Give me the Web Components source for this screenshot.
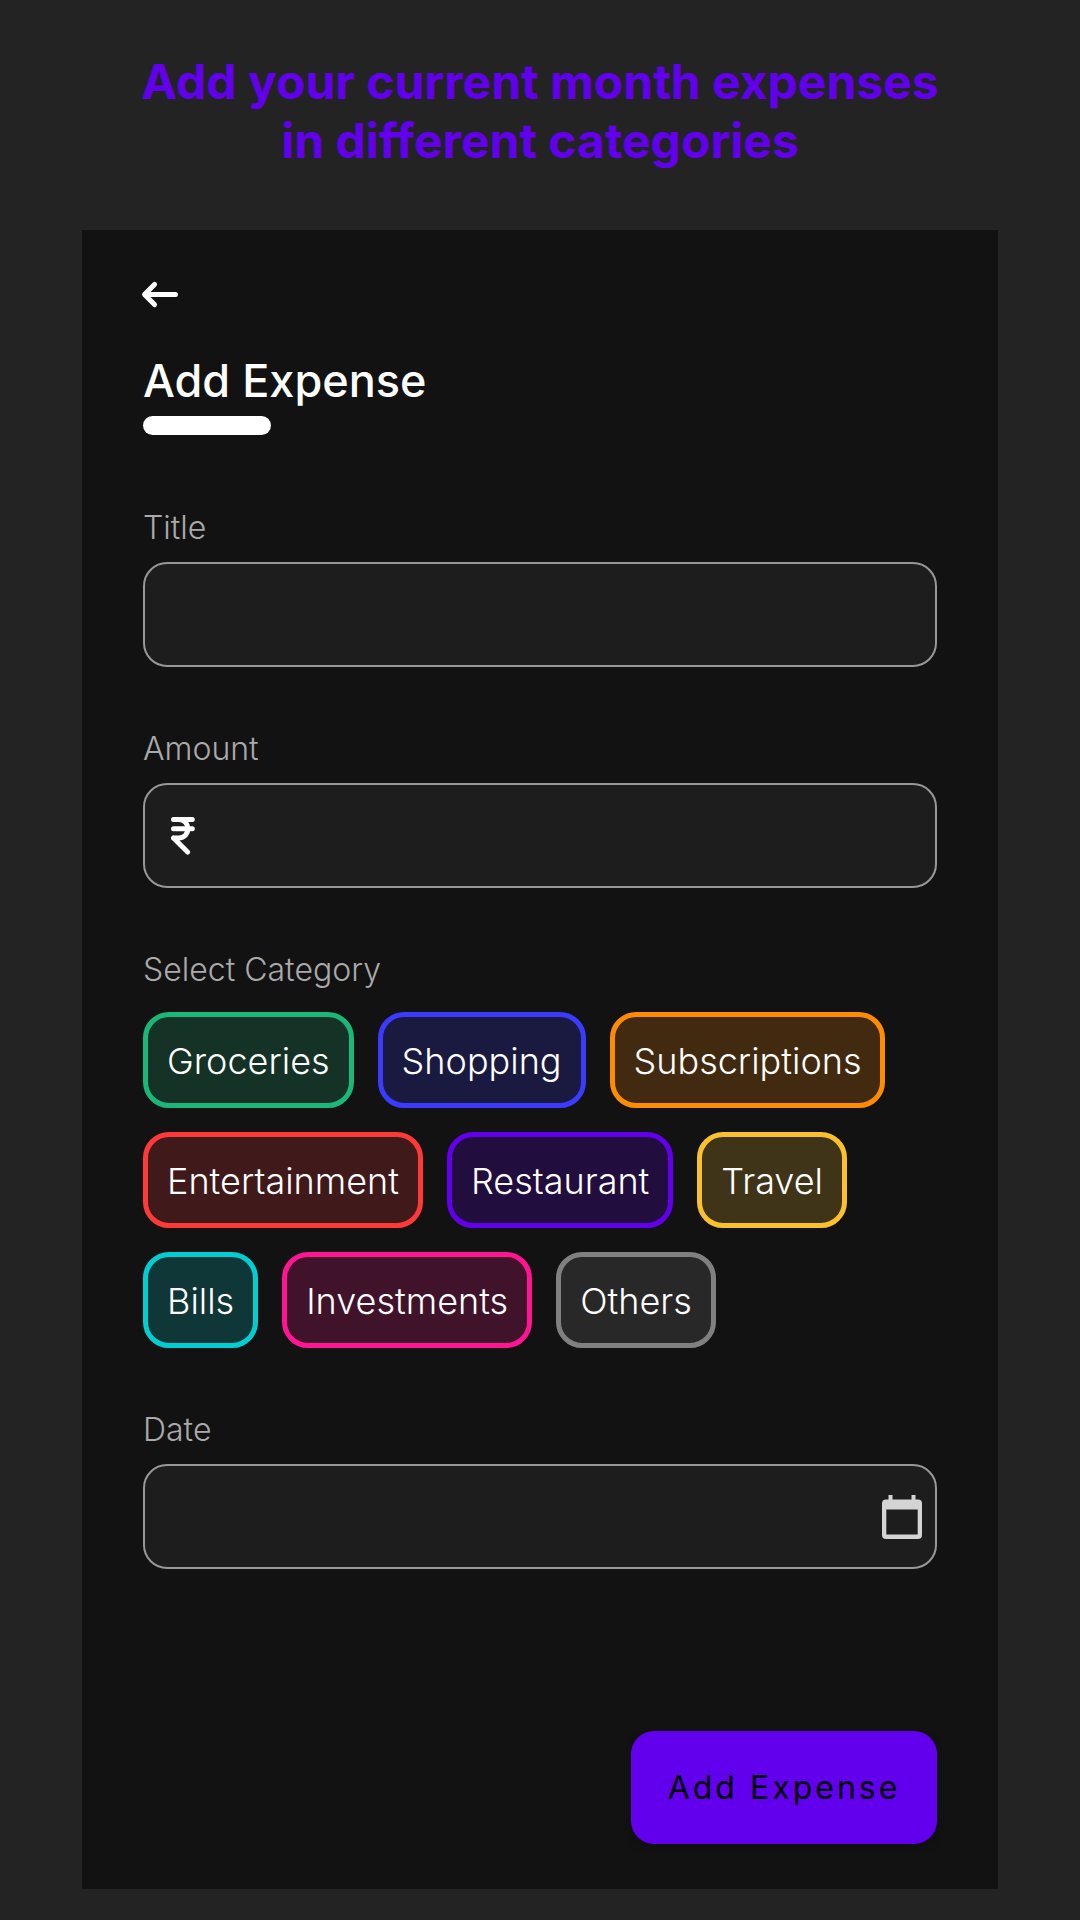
<!DOCTYPE html>
<html lang="en">
<head>
<meta charset="utf-8">
<meta name="viewport" content="width=device-width, initial-scale=1">
<title>Add Expense</title>
<style>
  body { margin: 0; background: #232323; color: #fff; font-family: Inter, "Liberation Sans", sans-serif; }
</style>
</head>
<body>
<promo-page>
  <promo-headline slot="headline">Add your current month expenses<br>in different categories</promo-headline>
  <expense-screen></expense-screen>
</promo-page>

<script>
const define = (name, html, setup) => customElements.define(name, class extends HTMLElement {
  constructor() {
    super();
    this.attachShadow({ mode: "open" }).innerHTML = html;
  }
  connectedCallback() { if (setup) setup(this, this.shadowRoot); }
});

define("promo-headline", `
<style>
  :host { display: block; }
  h1 { margin: 0; text-align: center; font-size: 48px; line-height: 59px; font-weight: 700; color: #6200ee; }
</style>
<h1><slot></slot></h1>`);

define("screen-title", `
<style>
  :host { display: block; }
  h2 { margin: 0; font-size: 45px; line-height: 58px; font-weight: 500; }
  .bar { width: 128px; height: 19px; margin-top: 6px; border-radius: 10px; background: #fff; }
</style>
<h2><slot></slot></h2>
<div class="bar"></div>`);

define("back-button", `
<style>
  :host { display: flex; }
  button { display: flex; padding: 0; border: 0; background: none; color: inherit; cursor: pointer; }
  svg { width: 36px; height: 26px; }
</style>
<button type="button" aria-label="Back">
  <svg viewBox="1 0 36 26" fill="none" stroke="currentColor" stroke-width="5" stroke-linecap="round" stroke-linejoin="round" overflow="visible"><path d="M12.500 2.400 2.500 12.500l10 10.100M3 12.500h30.500"/></svg>
</button>`);

define("expense-field", `
<style>
  :host { display: flex; flex-direction: column; gap: 15px; }
  label { font-size: 32px; line-height: 38px; font-weight: 300; color: #aaa; }
  .box { display: flex; align-items: center; box-sizing: border-box; min-height: 105px; border: 2px solid #989898; border-radius: 24px; background: #1d1d1d; }
  input { flex: 1; min-width: 0; height: 60px; padding: 0 24px; border: 0; outline: 0; background: none; color: #fff; font: inherit; font-size: 36px; }
</style>
<label for="control"></label>
<div class="box">
  <slot name="start"></slot>
  <input id="control" type="text">
  <slot name="end"></slot>
</div>`, (host, root) => {
  root.querySelector("label").textContent = host.getAttribute("label");
  root.querySelector("input").inputMode = host.getAttribute("mode") || "text";
});

define("rupee-icon", `
<style>
  :host { display: flex; padding-left: 26px; }
  svg { width: 24px; height: 38px; }
</style>
<svg viewBox="0 0 24 38" fill="none" stroke="currentColor" stroke-width="5" stroke-linecap="round" stroke-linejoin="round" aria-hidden="true"><path d="M2.500 2.500h18.800M2.500 11.800h18.800M2.500 21h5.200c6 0 9.200-4.600 9.200-9.200S13.700 2.500 7.700 2.500M2.500 21 16.600 35"/></svg>`);

define("calendar-button", `
<style>
  :host { display: flex; padding-right: 13px; }
  button { display: flex; padding: 0; border: 0; background: none; color: #d4d4d4; cursor: pointer; }
  svg { width: 40px; height: 44px; }
</style>
<button type="button" aria-label="Open calendar">
  <svg viewBox="0 0 40 44" fill="currentColor"><path fill-rule="evenodd" d="M4 4.500h2.500V0h4v4.500h19V0h4v4.500H36a4 4 0 0 1 4 4V40a4 4 0 0 1-4 4H4a4 4 0 0 1-4-4V8.500a4 4 0 0 1 4-4zM4.300 14.500v25h31.400v-25z"/></svg>
</button>`);

define("category-chip", `
<style>
  :host { display: flex; }
  button { display: flex; align-items: center; justify-content: center; height: 96px; padding: 2px 19px 0; border: 5px solid var(--line); border-radius: 26px; background: var(--fill); color: #fff; font: inherit; font-size: 36px; font-weight: 300; cursor: pointer; }
</style>
<button type="button"><span><slot></slot></span></button>`);

define("category-picker", `
<style>
  :host { display: flex; flex-direction: column; gap: 23px; }
  .name { font-size: 32px; line-height: 38px; font-weight: 300; color: #aaa; }
  .chips { display: flex; flex-wrap: wrap; gap: 24px; }
</style>
<div class="name" id="name">Select Category</div>
<div class="chips" role="group" aria-labelledby="name">
  <category-chip style="--line:#19b878;--fill:#143226">Groceries</category-chip>
  <category-chip style="--line:#3b3bff;--fill:#1a1a40">Shopping</category-chip>
  <category-chip style="--line:#ff8c00;--fill:#412a10">Subscriptions</category-chip>
  <category-chip style="--line:#ff3838;--fill:#401a1a">Entertainment</category-chip>
  <category-chip style="--line:#6200ee;--fill:#220e3e">Restaurant</category-chip>
  <category-chip style="--line:#fbc02d;--fill:#3f3418">Travel</category-chip>
  <category-chip style="--line:#00ced1;--fill:#0f3737">Bills</category-chip>
  <category-chip style="--line:#ff1493;--fill:#40132b">Investments</category-chip>
  <category-chip style="--line:#808080;--fill:#282828">Others</category-chip>
</div>`);

define("submit-button", `
<style>
  :host { display: flex; justify-content: flex-end; }
  button { min-width: 306px; height: 113px; padding: 0 32px; border: 0; border-radius: 23px; background: #6200ee; color: #000; font: inherit; font-size: 32px; font-weight: 400; letter-spacing: 3px; box-shadow: 0 5px 8px rgba(0, 0, 0, .2); cursor: pointer; }
</style>
<button type="submit"><slot></slot></button>`);

define("expense-screen", `
<style>
  :host { display: block; background: #121212; padding: 52px 61px 45px; }
  screen-title { margin: 44px 0 74px; }
  form { display: flex; flex-direction: column; gap: 63px; }
  submit-button { margin-top: 99px; }
</style>
<back-button></back-button>
<screen-title>Add Expense</screen-title>
<form>
  <expense-field label="Title"></expense-field>
  <expense-field label="Amount" mode="decimal"><rupee-icon slot="start"></rupee-icon></expense-field>
  <category-picker></category-picker>
  <expense-field label="Date"><calendar-button slot="end"></calendar-button></expense-field>
  <submit-button>Add Expense</submit-button>
</form>`);

define("promo-page", `
<style>
  :host { display: flex; flex-direction: column; gap: 60px; padding: 52px 82px 31px; }
</style>
<slot name="headline"></slot>
<slot></slot>`);
</script>
</body>
</html>
